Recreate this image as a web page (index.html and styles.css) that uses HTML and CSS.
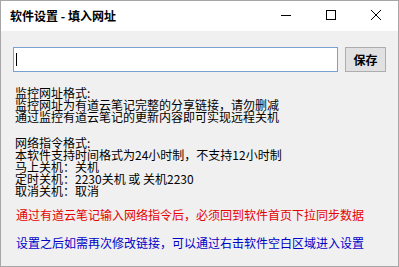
FILE: index.html
```html
<!DOCTYPE html>
<html lang="zh-CN">
<head>
<meta charset="utf-8">
<title>软件设置 - 填入网址</title>
<link rel="stylesheet" href="styles.css">
</head>
<body>
<div class="window">
  <div class="titlebar">
    <div class="title">软件设置 - 填入网址</div>
    <div class="caption">
      <div class="cbtn"><svg width="10" height="10" viewBox="0 0 10 10"><path d="M0 5.5H10" stroke="#000" stroke-width="1"/></svg></div>
      <div class="cbtn"><svg width="10" height="10" viewBox="0 0 10 10"><rect x="0.5" y="0.5" width="9" height="9" fill="none" stroke="#000" stroke-width="1"/></svg></div>
      <div class="cbtn"><svg width="10" height="10" viewBox="0 0 10 10"><path d="M0 0L10 10M10 0L0 10" stroke="#000" stroke-width="1"/></svg></div>
    </div>
  </div>
  <div class="content">
    <div class="urlrow">
      <div class="urlbox"><span class="caret"></span></div>
      <div class="savebtn">保存</div>
    </div>
    <div class="info">
      <div class="block">
        <div>监控网址格式:</div>
        <div>监控网址为有道云笔记完整的分享链接，请勿删减</div>
        <div>通过监控有道云笔记的更新内容即可实现远程关机</div>
      </div>
      <div class="block second">
        <div>网络指令格式:</div>
        <div>本软件支持时间格式为24小时制，不支持12小时制</div>
        <div>马上关机：关机</div>
        <div>定时关机：2230关机 或 关机2230</div>
        <div>取消关机：取消</div>
      </div>
    </div>
    <div class="note red">通过有道云笔记输入网络指令后，必须回到软件首页下拉同步数据</div>
    <div class="note blue">设置之后如需再次修改链接，可以通过右击软件空白区域进入设置</div>
  </div>
</div>
</body>
</html>
```
FILE: styles.css
```css
html, body {
  margin: 0;
  padding: 0;
}
body {
  font-family: "Noto Sans CJK SC", "Noto Sans", sans-serif;
  font-size: 12px;
  color: #000;
  background: #f0f0f0;
}
.window {
  width: 399px;
  height: 267px;
  box-sizing: border-box;
  border: 1px solid #a6a6a6;
  background: #f0f0f0;
  display: flex;
  flex-direction: column;
}
.titlebar {
  height: 30px;
  background: #fff;
  display: flex;
  align-items: center;
  justify-content: space-between;
}
.title {
  padding-left: 9px;
  font-weight: bold;
  font-size: 12px;
  line-height: 14px;
}
.caption {
  display: flex;
  height: 30px;
}
.cbtn {
  width: 45px;
  height: 30px;
  display: flex;
  align-items: center;
  justify-content: center;
}
.cbtn svg {
  display: block;
  margin-top: -3px;
}
.content {
  flex: 1;
  padding: 16px 0 0 12px;
}
.urlrow {
  display: flex;
  gap: 7px;
  height: 25px;
}
.urlbox {
  width: 325px;
  height: 25px;
  box-sizing: border-box;
  border: 1px solid #7a9fd2;
  background: #fff;
  display: flex;
  align-items: center;
  padding-left: 2px;
}
.caret {
  width: 1px;
  height: 13px;
  background: #000;
}
.savebtn {
  width: 41px;
  height: 25px;
  box-sizing: border-box;
  border: 1px solid #adadad;
  background: #e1e1e1;
  font-weight: bold;
  display: flex;
  align-items: center;
  justify-content: center;
  line-height: 14px;
}
.info {
  margin-top: 15px;
  padding-left: 2px;
  line-height: 12px;
}
.second {
  margin-top: 14px;
}
.note {
  padding-left: 3px;
  line-height: 12px;
}
.red {
  color: #e60000;
  margin-top: 12px;
}
.blue {
  color: #0000c8;
  margin-top: 16px;
}
```
